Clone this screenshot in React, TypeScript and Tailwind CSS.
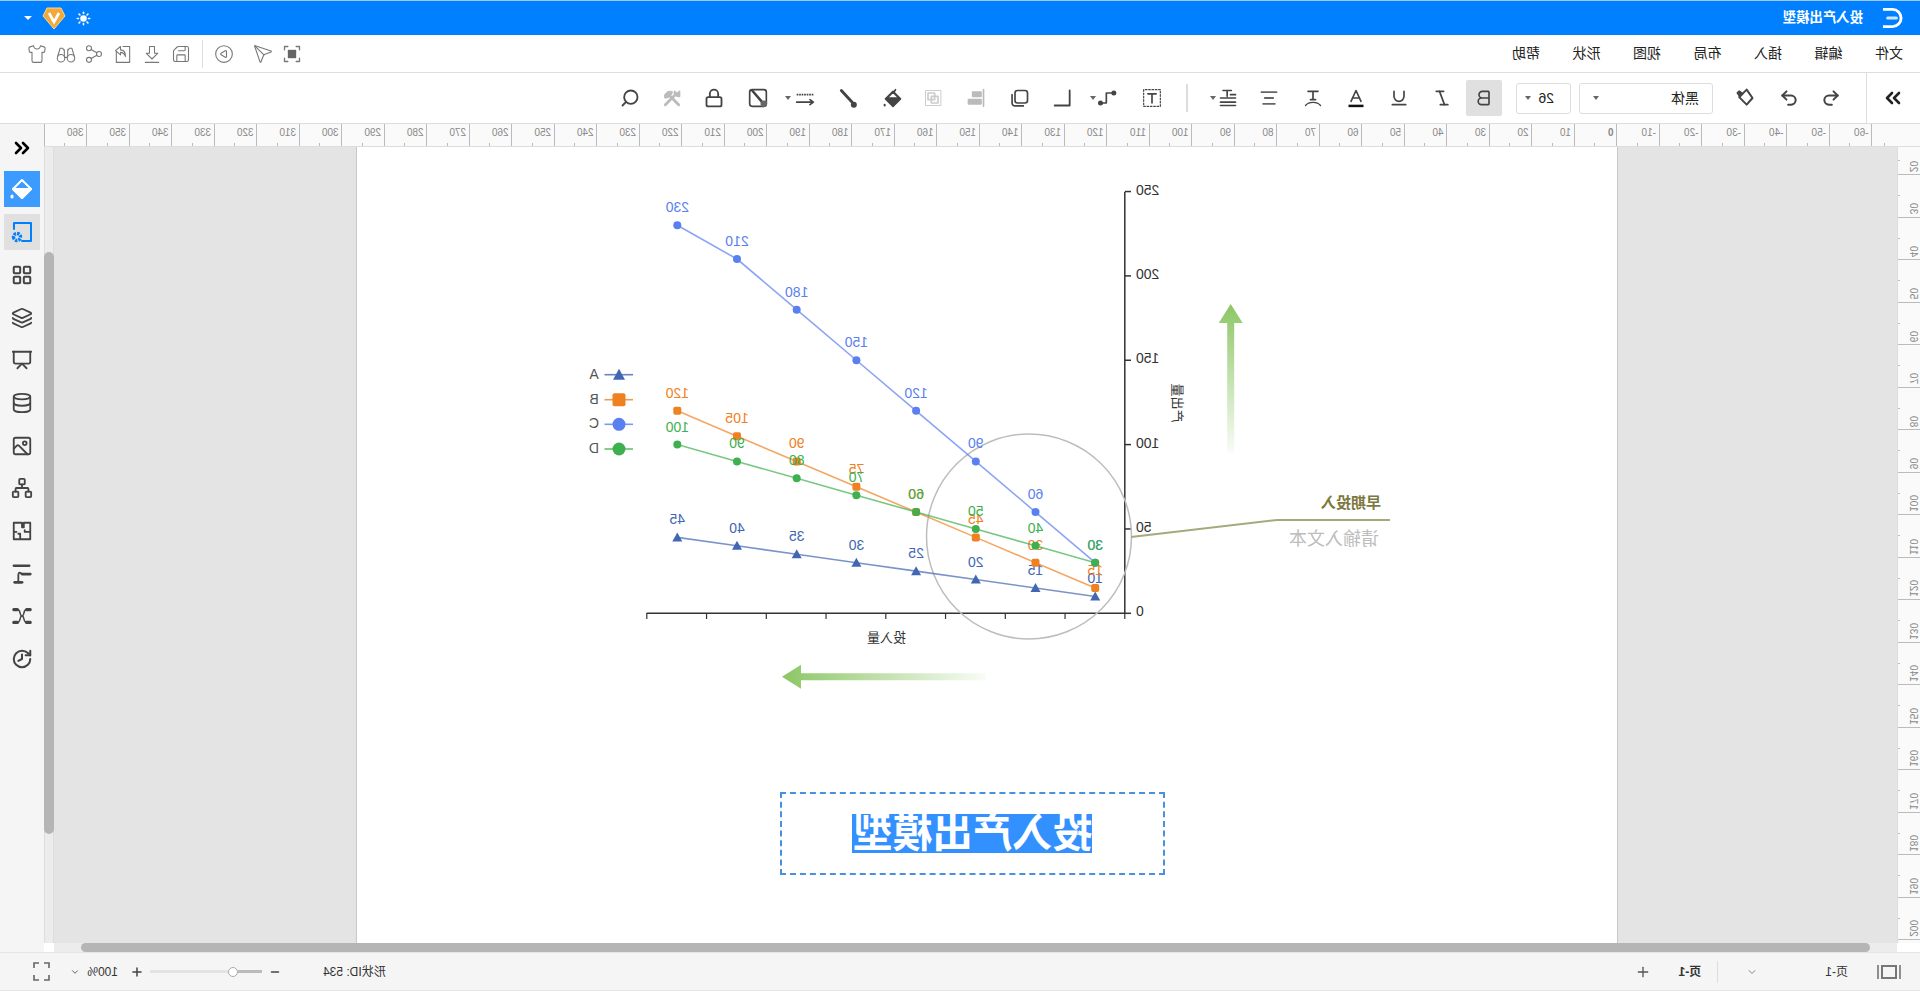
import React from "react";
import {
  Shirt, Share2, Save, CirclePlay, Send, ChevronsLeft, ChevronsRight, Undo2, Redo2,
  Bold, Italic, Underline, Search, Lock, AlignCenter, LayoutGrid, Layers,
  Presentation, Database, Image, Network, History, Plus, Minus, ChevronDown, Sun,
} from "lucide-react";

const ic = "w-5 h-5 text-[#444]";
const side = "w-[22px] h-[22px] text-[#444]";
const caret = <span className="inline-block w-0 h-0 border-x-[3.5px] border-x-transparent border-t-[4px] border-t-[#666]" />;

function Svg({ children, className = ic }: { children: React.ReactNode; className?: string }) {
  return (
    <svg viewBox="0 0 24 24" fill="none" stroke="currentColor" strokeWidth={2} strokeLinecap="round" strokeLinejoin="round" className={className}>
      {children}
    </svg>
  );
}

const thin = "w-5 h-5 text-[#777]";

const topIcons = [
  { m: "", n: (
    <Svg className={thin}><path d="M3 7V3h4M17 3h4v4M21 17v4h-4M7 21H3v-4" strokeWidth={1.6} /><rect x="7" y="7" width="10" height="10" fill="#666" stroke="none" /></Svg>
  ) },
  { m: "ml-[9.5px]", n: <Send strokeWidth={1.3} className={thin} /> },
  { m: "ml-[19px]", n: <CirclePlay strokeWidth={1.3} className={thin} /> },
  { m: "ml-[11px]", n: <span className="block w-px h-[28px] bg-[#ddd] mx-0" /> },
  { m: "ml-[10.5px]", n: <Save strokeWidth={1.3} className={thin} /> },
  { m: "ml-[9px]", n: (
    <Svg className={thin}><path d="M9 3h6v8h4l-7 7-7-7h4z" strokeWidth={1.3} /><path d="M4 22h16" strokeWidth={1.6} /></Svg>
  ) },
  { m: "ml-[9px]", n: (
    <Svg className={thin}><path d="M12 3H4v19h16V9" strokeWidth={1.3} /><path d="M15 3l6 5-6 5v-3c-3 0-5 2-6 5 0-5 2-8 6-8z" strokeWidth={1.3} /></Svg>
  ) },
  { m: "ml-[9px]", n: <Share2 strokeWidth={1.3} className={thin} /> },
  { m: "ml-[8.5px]", n: (
    <Svg className={thin}><circle cx="6" cy="17" r="4.5" strokeWidth={1.3} /><circle cx="18" cy="17" r="4.5" strokeWidth={1.3} /><path d="M10.5 16h3M2 15l3-10h3l1 2h1v8M22 15 19 5h-3l-1 2h-1v8" strokeWidth={1.3} /></Svg>
  ) },
  { m: "ml-[9px]", n: <Shirt strokeWidth={1.3} className={thin} /> },
];

const tools = [
  { m: "ml-[22px]", n: <Bold strokeWidth={2} className={ic} />, box: true },
  { m: "ml-[22px]", n: <Italic strokeWidth={2} className={ic} /> },
  { m: "ml-[23px]", n: <Underline strokeWidth={2} className={ic} /> },
  { m: "ml-[23px]", n: (
    <Svg><path d="M6 16 12 3l6 13M8 12h8" /><path d="M3 21.5h18" strokeWidth={3} stroke="#111" strokeLinecap="butt" /></Svg>
  ) },
  { m: "ml-[23px]", n: (
    <Svg><path d="M6 4h12M12 4v10M9 14h6" /><path d="M3 21c4-5 14-5 18 0" strokeWidth={1.6} /></Svg>
  ) },
  { m: "ml-[24px]", n: <AlignCenter strokeWidth={2.2} className="w-5 h-5 text-[#666]" /> },
  { m: "ml-[21px]", n: (
    <span className="flex items-center gap-[2px]"><Svg><path d="M8 3h10M13 3v7M3 8h6M3 12h18M3 17h18M3 21h18" /></Svg>{caret}</span>
  ), w: "w-[27px]" },
  { m: "ml-[23px]", n: <span className="block w-[2px] h-[28px] bg-[#ddd]" />, w: "w-[2px]" },
  { m: "ml-[24px]", n: (
    <Svg><rect x="2" y="2" width="20" height="20" strokeDasharray="2 2" strokeWidth={1.4} /><path d="M7 7h10M12 7v11" strokeWidth={2} /></Svg>
  ) },
  { m: "ml-[24px]", n: (
    <span className="flex items-center gap-[2px]"><Svg><circle cx="21" cy="18" r="2" fill="#444" /><path d="M19 18h-5V6H8" /><circle cx="5" cy="6" r="2" fill="#444" /></Svg>{caret}</span>
  ), w: "w-[27px]" },
  { m: "ml-[18px]", n: <Svg><path d="M4 3v18h18" strokeWidth={2.2} /></Svg> },
  { m: "ml-[23px]", n: (
    <Svg><rect x="3" y="3" width="15" height="15" rx="3" /><path d="M21.5 8v10a3.5 3.5 0 0 1-3.5 3.5H8" /></Svg>
  ) },
  { m: "ml-[24px]", n: (
    <Svg className="w-5 h-5 text-[#bbb]"><path d="M3 2v20" /><rect x="6" y="5" width="10" height="5" fill="#bbb" /><rect x="6" y="14" width="15" height="5" fill="#bbb" /></Svg>
  ) },
  { m: "ml-[23px]", n: (
    <Svg className="w-5 h-5 text-[#ccc]"><rect x="3" y="3" width="18" height="18" strokeWidth={1.2} /><rect x="6" y="10" width="8" height="8" /><rect x="10" y="6" width="8" height="8" /></Svg>
  ) },
  { m: "ml-[20px]", n: (
    <Svg><path d="M9 2l2 3" /><path d="M12 4l9 9-9 9-9-9z" fill="#444" /><path d="M5 12l7-7 7 7z" fill="#fff" /><path d="M22 20v1" strokeWidth={2.5} /></Svg>
  ) },
  { m: "ml-[25px]", n: (
    <Svg><path d="M20 3 7 17" strokeWidth={3.5} /><circle cx="5" cy="20" r="2.6" fill="#444" /></Svg>
  ) },
  { m: "ml-[20px]", n: (
    <span className="flex items-center gap-[2px]"><Svg className="w-6 h-5 text-[#444]"><path d="M2 8h20" strokeDasharray="2 1" strokeLinecap="butt" /><path d="M3 17h19M6 14l-4 3 4 3" /></Svg>{caret}</span>
  ), w: "w-[33px]" },
  { m: "ml-[17px]", n: (
    <Svg><rect x="2" y="2" width="20" height="20" rx="3" /><path d="M19 3 7 17" strokeWidth={3} /><circle cx="5" cy="19" r="3" fill="#666" stroke="#666" /></Svg>
  ) },
  { m: "ml-[24px]", n: <Lock strokeWidth={2.2} className={ic} /> },
  { m: "ml-[22px]", n: (
    <Svg className="w-5 h-5 text-[#bbb]">
      <path d="M20 20 9 9" strokeWidth={3.4} /><path d="M3 4l3 3 3-3a5 5 0 0 1-6 6z" strokeWidth={2} fill="#bbb" />
      <path d="M4 20 15 9" strokeWidth={3.4} /><path d="M12 4h5l4 4v4h-4l-5-5z" strokeWidth={1} fill="#bbb" />
    </Svg>
  ) },
  { m: "ml-[22px]", n: <Search strokeWidth={2.2} className={ic} /> },
];

const sideIcons = [
  <LayoutGrid key="a" strokeWidth={2.2} className={side} />,
  <Layers key="b" strokeWidth={2} className={side} />,
  <Presentation key="c" strokeWidth={2} className={side} />,
  <Database key="d" strokeWidth={2} className={side} />,
  <Image key="e" strokeWidth={2} className={side} />,
  <Network key="f" strokeWidth={2} className={side} />,
  <Svg key="g" className={side}><path d="M3 3h7v5h2V3h9v18H3zM3 13h6v-2M14 21v-6h2M21 13h-3" /></Svg>,
  <Svg key="h" className={side}><path d="M4 3h17" strokeWidth={2.5} /><path d="M3 12h9" strokeWidth={3} /><path d="M12 12c2-2 4-2 4 1v8" /><path d="M12 21h8" strokeWidth={3} /></Svg>,
  <Svg key="i" className={side}><path d="M3 5h4M17 5h4M3 19h4M17 19h4" strokeWidth={3.4} /><path d="M7 5c4 0 2 7 5 7s1-7 5-7M7 19c4 0 2-7 5-7s1 7 5 7" strokeWidth={1.6} /></Svg>,
  <History key="j" strokeWidth={2.2} className={side} />,
];

const hTicks = Array.from({ length: 44 }, (_, i) => -6 + i);
const vTicks = Array.from({ length: 19 }, (_, i) => 20 + i * 10);

const x = (i: number) => 823.8 + 59.7 * i;
const y = (v: number) => 613.3 - 1.687 * v;
const series = [
  { k: "A", c: "#4267b2", d: [10, 15, 20, 25, 30, 35, 40, 45], s: "tri" },
  { k: "B", c: "#ef8122", d: [15, 30, 45, 60, 75, 90, 105, 120], s: "sq" },
  { k: "C", c: "#5a7ff0", d: [30, 60, 90, 120, 150, 180, 210, 230], s: "ci" },
  { k: "D", c: "#3fb04f", d: [30, 40, 50, 60, 70, 80, 90, 100], s: "ci" },
];

function Marker({ s, cx, cy, c, r }: { s: string; cx: number; cy: number; c: string; r: number }) {
  if (s === "tri") return <path d={`M${cx} ${cy - r - 1}L${cx + r + 1} ${cy + r}L${cx - r - 1} ${cy + r}Z`} fill={c} />;
  if (s === "sq") return <rect x={cx - r} y={cy - r} width={r * 2} height={r * 2} rx={2} fill={c} />;
  return <circle cx={cx} cy={cy} r={r} fill={c} />;
}

function Chart() {
  return (
    <svg viewBox="302 147 1262 796" className="block w-[1262px] h-[796px]">
      <defs>
        <linearGradient id="up" x1="0" y1="1" x2="0" y2="0">
          <stop offset="0" stopColor="#8cc665" stopOpacity="0.05" />
          <stop offset="1" stopColor="#8cc665" />
        </linearGradient>
        <linearGradient id="side" x1="0" y1="0" x2="1" y2="0">
          <stop offset="0" stopColor="#8cc665" stopOpacity="0.05" />
          <stop offset="1" stopColor="#8cc665" />
        </linearGradient>
      </defs>
      <path d="M794.2 191.7V613.3H1272.2" fill="none" stroke="#333" strokeWidth="1.5" />
      {[0, 50, 100, 150, 200, 250].map((v) => (
        <g key={v}>
          <path d={`M788 ${y(v)}H794`} stroke="#333" strokeWidth="1.5" />
          <text x={783} y={y(v) + 3} textAnchor="end" fontSize="14" fill="#333">{v}</text>
        </g>
      ))}
      {Array.from({ length: 9 }, (_, k) => (
        <path key={k} d={`M${794.2 + 59.75 * k} 613V619`} stroke="#333" strokeWidth="1.2" />
      ))}
      <text x={1032.6} y={642} textAnchor="middle" fontSize="13" fill="#333">投入量</text>
      <text transform="translate(746 403) rotate(-90)" textAnchor="middle" fontSize="13" fill="#333">产出量</text>
      <circle cx={890} cy={536.5} r={102.5} fill="none" stroke="#bdbdbd" strokeWidth="1.5" />
      {series.map((s) => (
        <g key={s.k}>
          <polyline points={s.d.map((v, i) => `${x(i)},${y(v)}`).join(" ")} fill="none" stroke={s.c} strokeOpacity="0.7" strokeWidth="1.6" />
          {s.d.map((v, i) => (
            <g key={i}>
              <Marker s={s.s} cx={x(i)} cy={y(v)} c={s.c} r={4} />
              <text x={x(i)} y={y(v) - 13} textAnchor="middle" fontSize="14" fill={s.c}>{v}</text>
            </g>
          ))}
        </g>
      ))}
      {series.map((s, i) => {
        const ly = [374.7, 399.7, 424.3, 449][i];
        return (
          <g key={s.k}>
            <path d={`M1286 ${ly}H1314.5`} stroke={s.c} strokeOpacity="0.8" strokeWidth="1.6" />
            <Marker s={s.s} cx={1300} cy={ly} c={s.c} r={s.s === "tri" ? 5 : 6.5} />
            <text x={1325} y={ly + 4} textAnchor="middle" fontSize="14" fill="#555">{s.k}</text>
          </g>
        );
      })}
      <polyline points="788,537 642,520 529,520" fill="none" stroke="#a5aa7c" strokeWidth="2" />
      <text x={538} y={508} fontSize="15" fontWeight="700" fill="#7d7740">早期投入</text>
      <text x={540} y={545} fontSize="18" fill="#bdbdbd">请输入文本</text>
      <path d="M688.3 304L700.3 323H691.8V453H684.8V323H676.3Z" fill="url(#up)" />
      <path d="M1137 676.7L1118 664.7V673.2H933V680.2H1118V688.7Z" fill="url(#side)" />
    </svg>
  );
}

export default function App() {
  return (
    <div className="-scale-x-100 w-[1920px] h-[991px] overflow-hidden flex flex-col bg-white text-[#333] font-['Liberation_Sans','Noto_Sans_CJK_SC',sans-serif]">
      <header className="h-[35px] shrink-0 bg-[#0080ff] border-t border-[#9cc9f5] flex items-center text-white">
        <svg viewBox="0 0 22 22" className="ml-[17px] w-[21px] h-[22px]" fill="none" stroke="#fff">
          <path d="M21 2H11a9 9 0 0 0 0 18h10" strokeWidth="3" />
          <path d="M7 11h9" strokeWidth="3.4" strokeLinecap="round" stroke="#cfe6ff" />
        </svg>
        <span className="ml-[19px] text-[13.4px] font-bold">投入产出模型</span>
        <div className="ml-auto flex items-center">
          <Sun fill="#fff" strokeWidth={2.5} className="w-[15px] h-[15px]" />
          <svg viewBox="0 0 24 24" className="ml-[10px] w-[24px] h-[26px]">
            <path d="M5 2h14l4 8-11 13L1 10z" fill="#f2a93b" stroke="#ffd58a" strokeWidth="1" />
            <path d="M7 7l5 9 5-9" fill="none" stroke="#fff" strokeWidth="2.6" />
          </svg>
          <span className="ml-[10px] mr-[24px] w-0 h-0 border-x-[4px] border-x-transparent border-t-[4px] border-t-white" />
        </div>
      </header>

      <div className="h-[38px] shrink-0 bg-white border-b border-[#ddd] flex items-center text-[14px] text-[#222]">
        <nav className="ml-[17px] flex gap-[32.5px]">
          {["文件", "编辑", "插入", "布局", "视图", "形状", "帮助"].map((t) => (
            <span key={t}>{t}</span>
          ))}
        </nav>
        <div className="ml-auto mr-[27px] flex items-center">
          {topIcons.map((t, i) => (
            <span key={i} className={t.m}>{t.n}</span>
          ))}
        </div>
      </div>

      <div className="h-[51px] shrink-0 bg-white border-b border-[#ddd] flex items-center">
        <span className="w-[54px] h-full border-r border-[#ddd] flex items-center justify-center">
          <ChevronsRight strokeWidth={2.6} className="w-6 h-6 text-[#222]" />
        </span>
        <Undo2 strokeWidth={2.4} className="ml-[25px] w-5 h-5 text-[#444]" />
        <Redo2 strokeWidth={2.4} className="ml-[22px] w-5 h-5 text-[#444]" />
        <svg viewBox="0 0 24 24" className="ml-[24px] w-5 h-5 text-[#444]" fill="none" stroke="currentColor" strokeWidth="2.4" strokeLinejoin="round">
          <path d="M10 2l9 9-9 9-7-8z" />
          <path d="M15 7l4-3 2 2-3 4z" fill="currentColor" />
        </svg>
        <div className="ml-[22px] w-[134px] h-[31px] border border-[#ddd] rounded-[3px] flex items-center px-[13px] justify-between text-[14px] text-[#222]">
          <span>黑体</span>{caret}
        </div>
        <div className="ml-2 w-[55px] h-[31px] border border-[#ddd] rounded-[3px] flex items-center pl-[16px] pr-[8px] justify-between text-[14px] text-[#222]">
          <span>26</span>{caret}
        </div>
        {tools.map((t, i) => (
          <span key={i} className={`${t.m} ${t.w ?? "w-5"} shrink-0 flex items-center justify-center relative`}>
            {t.box ? <span className="absolute -left-2 -right-2 -top-[8px] -bottom-[8px] bg-[#e0e0e0] rounded-[2px]" /> : null}
            <span className="relative">{t.n}</span>
          </span>
        ))}
      </div>

      <main className="flex-1 min-h-0 flex">
        <div className="flex-1 min-w-0 flex flex-col">
          <div className="h-[23px] shrink-0 flex bg-[#fafafa] border-b border-[#ddd] overflow-hidden">
            <div className="w-[24.5px] ml-[23px] shrink-0 flex items-end justify-center">
              <span className="w-px h-[3px] bg-[#bbb]" />
            </div>
            {hTicks.map((n) => (
              <div key={n} className="w-[42.5px] shrink-0 border-l border-[#bbb] flex flex-col justify-between">
                <span className={`pl-[3px] pt-[3px] text-[10px] leading-[11px] text-[#888] ${n === 0 ? "font-bold" : ""}`}>{n === 37 ? "" : n * 10}</span>
                <span className="ml-[21px] w-px h-[3px] bg-[#bbb]" />
              </div>
            ))}
          </div>
          <div className="flex-1 min-h-0 flex">
            <div className="w-[23px] shrink-0 bg-[#fafafa] border-r border-[#ddd] overflow-hidden">
              {vTicks.map((v) => (
                <div key={v} className={`${v === 20 ? "h-[28px]" : "h-[42.5px]"} border-b border-[#bbb] flex items-end pl-[3px]`}>
                  <span className="rotate-180 [writing-mode:vertical-rl] text-[10px] leading-[8px] pt-[2px] text-[#888]">{v}</span>
                  <span className="self-center ml-auto w-[2px] h-px bg-[#bbb]" />
                </div>
              ))}
            </div>
            <div className="flex-1 min-w-0 bg-[#e4e4e4] overflow-hidden pl-[279px]">
              <div className="relative w-[1262px] h-full bg-white border-x border-[#c8c8c8]">
                <Chart />
                <div className="absolute left-[452px] top-[645px] w-[385px] h-[83px] border-2 border-dashed border-[#4a90e2] flex items-center justify-center">
                  <span className="bg-[#3390ff] text-white text-[40px] leading-[39px] font-bold whitespace-nowrap">投入产出模型</span>
                </div>
              </div>
            </div>
            <div className="w-[10px] shrink-0 bg-[#ececec] border-x border-[#ddd] pt-[105px]">
              <div className="h-[582px] -mx-px bg-[#b5b5b5] rounded-t-[5px] rounded-b-[5px]" />
            </div>
          </div>
          <div className="h-[9px] shrink-0 pl-[23px] pr-[10px]">
            <div className="h-full bg-[#ececec] pl-[27px] pr-[27px]">
              <div className="h-full bg-[#b5b5b5] rounded-[5px]" />
            </div>
          </div>
        </div>
        <aside className="w-[44px] shrink-0 bg-[#f5f5f5] flex flex-col items-center">
          <span className="h-[47px] flex items-center">
            <ChevronsLeft strokeWidth={2.6} className="w-6 h-6 text-black" />
          </span>
          <span className="w-9 h-9 bg-[#3b9bff] flex items-center justify-center">
            <Svg className="w-6 h-6 text-white">
              <path d="M12 3l9 9-9 9-9-9z" />
              <path d="M3 12h18l-9 9z" fill="#fff" />
              <path d="M22 19v1" strokeWidth={3} />
            </Svg>
          </span>
          <span className="mt-[7px] w-9 h-9 bg-[#e0e0e0] flex items-center justify-center">
            <Svg className="w-6 h-6 text-[#0080ff]">
              <path d="M20 9V3H3v18h9" strokeWidth={2} />
              <circle cx="17" cy="17" r="3.5" strokeWidth={3.4} strokeDasharray="2.4 1" strokeLinecap="butt" />
            </Svg>
          </span>
          <div className="mt-[3.5px] flex flex-col">
            {sideIcons.map((s, i) => (
              <span key={i} className="h-[42.7px] flex items-center justify-center">{s}</span>
            ))}
          </div>
        </aside>
      </main>

      <footer className="h-[39px] shrink-0 bg-[#f5f5f5] border-t border-[#e5e5e5] border-b flex items-center text-[12px] text-[#333]">
        <svg viewBox="0 0 24 16" className="ml-[19px] w-6 h-4 text-[#777]" fill="none" stroke="currentColor" strokeWidth="1.6">
          <path d="M1 1v14M23 1v14" />
          <rect x="5" y="2" width="14" height="12" strokeWidth="2" />
        </svg>
        <span className="ml-[29px]">页-1</span>
        <ChevronDown className="ml-[67px] w-3 h-3 text-[#888]" />
        <span className="ml-[28px] w-px h-[22px] bg-[#ddd]" />
        <span className="ml-[16px] font-bold">页-1</span>
        <Plus className="ml-[28px] w-4 h-4 text-[#555]" />
        <div className="ml-auto mr-[33px] flex items-center">
          <span>形状ID: 534</span>
          <Minus className="ml-[42px] w-3 h-3 text-[#444]" strokeWidth={3} />
          <div className="ml-[7px] w-[112px] flex items-center">
            <span className="w-[24px] h-[3px] bg-[#bbb]" />
            <span className="w-[10px] h-[10px] rounded-full border border-[#aaa] bg-white" />
            <span className="flex-1 h-[3px] bg-[#e3e3e3]" />
          </div>
          <Plus className="ml-[6px] w-[14px] h-[14px] text-[#444]" strokeWidth={2.6} />
          <span className="ml-3 w-8">100%</span>
          <ChevronDown className="ml-[6px] w-[10px] h-[10px] text-[#444]" />
          <svg viewBox="0 0 17 19" className="ml-[20px] w-[17px] h-[19px] text-[#666]" fill="none" stroke="currentColor" strokeWidth="1.6">
            <path d="M1 6V1h5M11 1h5v5M16 13v5h-5M6 18H1v-5" />
          </svg>
        </div>
      </footer>
    </div>
  );
}
